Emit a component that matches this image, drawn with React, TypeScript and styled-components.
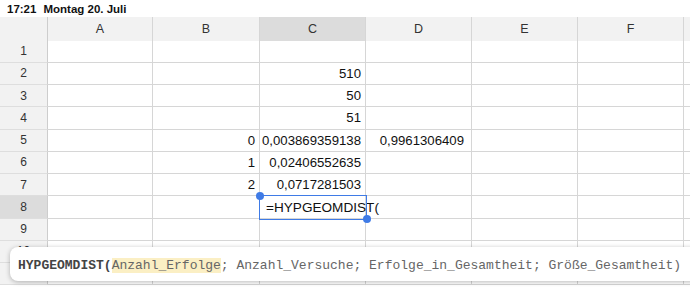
import React from "react";
import styled, { createGlobalStyle } from "styled-components";

const GlobalStyle = createGlobalStyle`
  html, body {
    margin: 0;
    padding: 0;
    background: #ffffff;
  }
  * {
    box-sizing: border-box;
  }
`;

const COLS = ["A", "B", "C", "D", "E", "F", ""];
const ROWS = 11;

type TCell = { text: string; align?: "left" | "right"; pad?: number };

// row -> col -> value
const DATA: Record<number, Record<string, TCell>> = {
  2: { C: { text: "510" } },
  3: { C: { text: "50" } },
  4: { C: { text: "51" } },
  5: {
    B: { text: "0" },
    C: { text: "0,003869359138" },
    D: { text: "0,9961306409", pad: 7 },
  },
  6: { B: { text: "1" }, C: { text: "0,02406552635" } },
  7: { B: { text: "2" }, C: { text: "0,0717281503" } },
};

const ACTIVE_COL = "C";
const ACTIVE_ROW = 8;

const App = () => {
  return (
    <Page>
      <GlobalStyle />
      <StatusBar>
        <span>17:21</span>
        <span>Montag 20. Juli</span>
      </StatusBar>
      <Sheet>
        <Corner />
        {COLS.map((c, i) => (
          <ColHeader key={i} $active={c === ACTIVE_COL}>
            {c}
          </ColHeader>
        ))}
        {Array.from({ length: ROWS }, (_, r) => {
          const row = r + 1;
          return (
            <React.Fragment key={row}>
              <RowHeader $active={row === ACTIVE_ROW}>{row}</RowHeader>
              {COLS.map((c, i) => {
                const cell = DATA[row]?.[c];
                const editing = row === ACTIVE_ROW && c === ACTIVE_COL;
                return (
                  <Cell
                    key={i}
                    $align={cell?.align || "right"}
                    $pad={cell?.pad ?? 4}
                  >
                    {cell && cell.text}
                    {editing && (
                      <>
                        <EditText>=HYPGEOMDIST(</EditText>
                        <Selection>
                          <Handle $pos="start" />
                          <Handle $pos="end" />
                        </Selection>
                      </>
                    )}
                  </Cell>
                );
              })}
            </React.Fragment>
          );
        })}
      </Sheet>
      <Hint>
        <FnName>HYPGEOMDIST(</FnName>
        <Current>Anzahl_Erfolge</Current>
        <span>; Anzahl_Versuche; Erfolge_in_Gesamtheit; Größe_Gesamtheit)</span>
      </Hint>
    </Page>
  );
};

export default App;

const Page = styled.div`
  position: relative;
  width: 690px;
  height: 287px;
  overflow: hidden;
  background: #ffffff;
  font-family: "Liberation Sans", Arial, sans-serif;
`;

const StatusBar = styled.div`
  display: flex;
  align-items: center;
  gap: 7px;
  height: 17px;
  padding: 0 7px;
  font-size: 11.5px;
  font-weight: 700;
  color: #111111;
`;

const Sheet = styled.div`
  display: grid;
  grid-template-columns: 48px 105px 107px repeat(4, 106px) 1fr;
  grid-template-rows: 23.5px;
  grid-auto-rows: 22.25px;
`;

const Corner = styled.div`
  background: #f2f2f2;
  border-right: 1px solid #cdcdcd;
`;

const ColHeader = styled.div<{ $active?: boolean }>`
  display: flex;
  align-items: center;
  justify-content: center;
  background: ${({ $active }) => ($active ? "#dcdcdc" : "#f2f2f2")};
  border-right: 1px solid #d6d6d6;
  font-size: 12.5px;
  color: #333333;
`;

const RowHeader = styled.div<{ $active?: boolean }>`
  display: flex;
  align-items: center;
  justify-content: center;
  background: ${({ $active }) => ($active ? "#dcdcdc" : "#f2f2f2")};
  border-right: 1px solid #cdcdcd;
  border-bottom: 1px solid #dedede;
  font-size: 12px;
  color: #333333;
`;

const Cell = styled.div<{ $align: "left" | "right"; $pad: number }>`
  position: relative;
  display: flex;
  align-items: center;
  justify-content: ${({ $align }) =>
    $align === "right" ? "flex-end" : "flex-start"};
  padding: 0 ${({ $pad }) => $pad}px 0 4px;
  border-right: 1px solid #d6d6d6;
  border-bottom: 1px solid #d6d6d6;
  font-size: 13.2px;
  color: #111111;
  white-space: nowrap;
`;

const EditText = styled.span`
  position: absolute;
  left: 6px;
  top: 50%;
  transform: translateY(-50%);
  z-index: 2;
  font-size: 13.6px;
  color: #111111;
  white-space: nowrap;
`;

const Selection = styled.div`
  position: absolute;
  left: -1px;
  top: -1px;
  right: -2px;
  bottom: -2px;
  border: 1.5px solid #3f7be6;
  z-index: 3;
  pointer-events: none;
`;

const Handle = styled.span<{ $pos: "start" | "end" }>`
  position: absolute;
  width: 8px;
  height: 8px;
  border-radius: 50%;
  background: #3f7be6;
  ${({ $pos }) =>
    $pos === "start" ? "left: -4.5px; top: -4.5px;" : "right: -4.5px; bottom: -4.5px;"}
`;

const Hint = styled.div`
  position: absolute;
  left: 10px;
  top: 247px;
  width: 700px;
  height: 34px;
  display: flex;
  align-items: center;
  padding: 3px 0 0 8px;
  background: #ffffff;
  border-radius: 8px;
  box-shadow: 0 1px 5px rgba(0, 0, 0, 0.28);
  font-family: "Liberation Mono", "Courier New", monospace;
  font-size: 13px;
  color: #666666;
  white-space: pre;
`;

const FnName = styled.span`
  font-weight: 700;
  color: #444444;
`;

const Current = styled.span`
  background: #fbefc4;
  color: #666666;
`;
